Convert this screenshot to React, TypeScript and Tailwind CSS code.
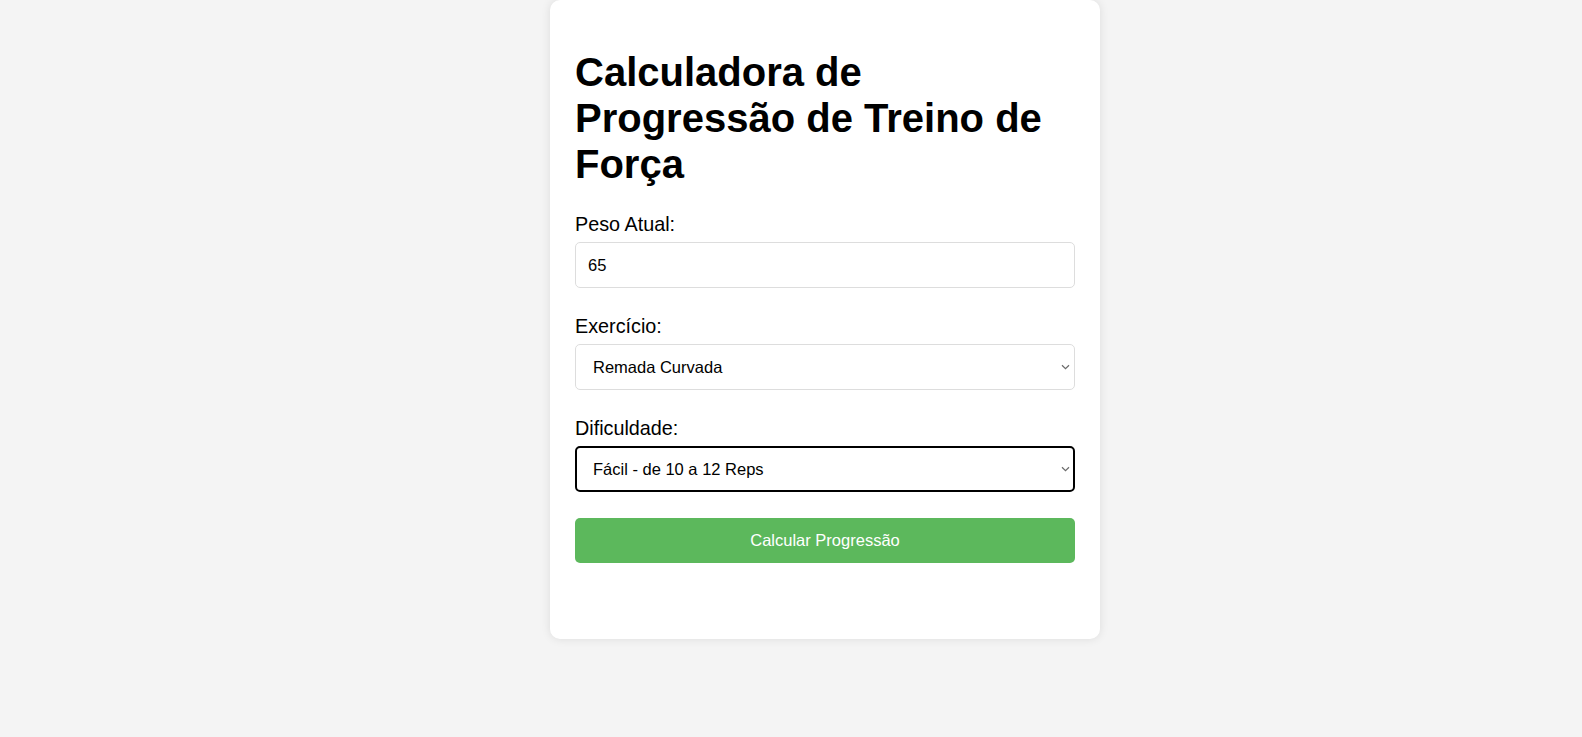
import React, { useState } from 'react';

function Chevron() {
  return (
    <svg
      className="pointer-events-none absolute right-[5px] top-1/2 -translate-y-1/2"
      width="9"
      height="6"
      viewBox="0 0 9 6"
      fill="none"
    >
      <path d="M1 1.2 L4.5 4.6 L8 1.2" stroke="#6b6b6b" strokeWidth="1.2" />
    </svg>
  );
}

export default function App() {
  const [peso, setPeso] = useState('65');
  const [exercicio, setExercicio] = useState('remada');
  const [dificuldade, setDificuldade] = useState('facil');

  return (
    <div className="min-h-screen bg-[#f4f4f4] flex justify-center pl-[68px] font-['Liberation_Sans',Arial,sans-serif] text-black">
      <div className="w-[550px] self-start bg-white rounded-[10px] shadow-[0_0_10px_rgba(0,0,0,0.1)] px-[25px] pt-[49px] pb-[76px]">
        <h1 className="text-[40px] leading-[46px] font-bold">
          Calculadora de Progressão de Treino de Força
        </h1>

        <label className="block mt-[26px] mb-[7px] text-[19.8px] leading-[22px]">Peso Atual:</label>
        <input
          type="text"
          value={peso}
          onChange={(e) => setPeso(e.target.value)}
          className="block w-full h-[46px] px-[12px] text-[16.5px] border border-[#dddddd] rounded-[5px] outline-none"
        />

        <label className="block mt-[27px] mb-[7px] text-[19.8px] leading-[22px]">Exercício:</label>
        <div className="relative">
          <select
            value={exercicio}
            onChange={(e) => setExercicio(e.target.value)}
            className="block w-full h-[46px] pl-[17px] pr-[20px] text-[16.5px] bg-white border border-[#dddddd] rounded-[5px] outline-none appearance-none"
          >
            <option value="supino">Supino Reto</option>
            <option value="agachamento">Agachamento</option>
            <option value="remada">Remada Curvada</option>
            <option value="terra">Levantamento Terra</option>
          </select>
          <Chevron />
        </div>

        <label className="block mt-[27px] mb-[7px] text-[19.8px] leading-[22px]">Dificuldade:</label>
        <div className="relative">
          <select
            value={dificuldade}
            onChange={(e) => setDificuldade(e.target.value)}
            className="block w-full h-[46px] pl-[16px] pr-[20px] text-[16.5px] bg-white border-2 border-black rounded-[5px] outline-none appearance-none"
          >
            <option value="facil">Fácil - de 10 a 12 Reps</option>
            <option value="medio">Médio - de 8 a 10 Reps</option>
            <option value="dificil">Difícil - de 6 a 8 Reps</option>
          </select>
          <Chevron />
        </div>

        <button
          type="button"
          className="block w-full h-[45px] mt-[26px] bg-[#5cb85c] text-white text-[16.5px] rounded-[5px] cursor-pointer"
        >
          Calcular Progressão
        </button>
      </div>
    </div>
  );
}
